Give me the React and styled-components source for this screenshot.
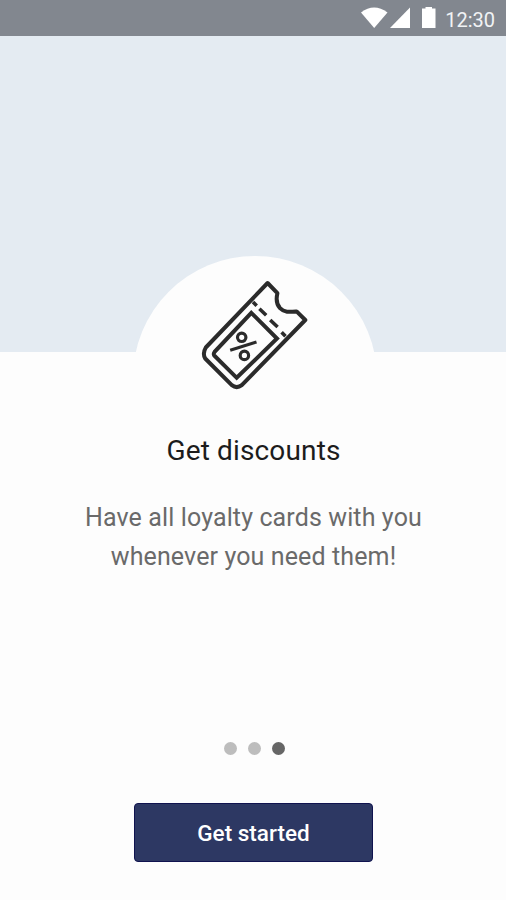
import React from 'react'
import styled, { createGlobalStyle } from 'styled-components'

const colors = {
    page: '#fdfdfd',
    statusbar: '#82878f',
    hero: '#e4ebf2',
    title: '#1c1c1c',
    text: '#6a6a6a',
    icon: '#2b2b2b',
    dot: '#bdbdbd',
    dotActive: '#666666',
    primary: '#2d3863',
    primaryDark: '#10134f'
}

function App() {
    return (
        <React.Fragment>
            <GlobalStyle />
            <Screen>
                <StatusBar>
                    <StatusIcons />
                    <Time>12:30</Time>
                </StatusBar>
                <Hero>
                    <Circle>
                        <TicketIcon />
                    </Circle>
                </Hero>
                <Content>
                    <Title>Get discounts</Title>
                    <Description>
                        <span>Have all loyalty cards with you</span>
                        <span>whenever you need them!</span>
                    </Description>
                </Content>
                <Pager steps={3} current={2} />
                <Button type="button">Get started</Button>
            </Screen>
        </React.Fragment>
    )
}

function Pager({ steps, current }) {
    return (
        <Dots>
            {Array.from({ length: steps }, (_, i) => (
                <Dot key={i} $active={i === current} />
            ))}
        </Dots>
    )
}

function StatusIcons() {
    return (
        <svg width="78" height="24" viewBox="0 0 78 24" fill="#fff">
            <path d="M1 6.5Q14 -3.5 27.5 6.5L14.2 22Z" />
            <path d="M50 1.5V22H30Z" />
            <path d="M62 2.5H65.5V1H72V2.5H75.5V22H62Z" />
        </svg>
    )
}

function TicketIcon() {
    return (
        <svg width="130" height="130" viewBox="0 0 130 130" fill="none" stroke={colors.icon} strokeWidth="4" strokeLinejoin="round">
            <path d="M77.6 13L87.4 23.2C86 29 86.2 34 90 38.2C94.2 42.6 99.5 42 106.6 41.4L115.3 50L51.8 115.2Q46.7 119 41.8 115.2L15.2 88.5Q12.3 83.5 15.8 77.5Z" />
            <path d="M61.3 42.8L87 68.5L46.7 107.8L24.2 85.4Q23.2 83.8 24.6 81.8Z" strokeLinejoin="miter" />
            <path d="M63 32L66.7 35.7M69.4 38.8L76.2 45.2M80.2 50L87.6 57M91.6 62.2L95.5 66.2" strokeWidth="3.6" />
            <circle cx="51.7" cy="67.3" r="4.2" strokeWidth="3.2" />
            <circle cx="54.4" cy="85.4" r="4.2" strokeWidth="3.2" />
            <path d="M40.2 80.2L66.5 72" strokeWidth="3" />
        </svg>
    )
}

const GlobalStyle = createGlobalStyle`
    body {
        margin: 0;
        font-family: Roboto, sans-serif;
    }
    * {
        box-sizing: border-box;
    }
`
const Screen = styled.main`
    display: flex;
    flex-direction: column;
    align-items: center;
    width: 506px;
    height: 900px;
    overflow: hidden;
    background: ${colors.page};
`
const StatusBar = styled.header`
    display: flex;
    flex: none;
    align-items: center;
    justify-content: flex-end;
    gap: 7px;
    width: 100%;
    height: 36px;
    padding-right: 11px;
    background: ${colors.statusbar};
    & svg {
        margin-bottom: 1px;
    }
`
const Time = styled.span`
    color: #f1f3f5;
    font-size: 20px;
    line-height: 24px;
    padding-top: 4px;
`
const Hero = styled.section`
    display: flex;
    flex: none;
    justify-content: center;
    align-items: flex-start;
    width: 100%;
    height: 316px;
    padding: 220px 0 0 4px;
    background: ${colors.hero};
`
const Circle = styled.div`
    display: flex;
    flex: none;
    justify-content: center;
    align-items: flex-start;
    width: 244px;
    height: 244px;
    padding-top: 14px;
    border-radius: 50%;
    background: ${colors.page};
`
const Content = styled.section`
    display: flex;
    flex: none;
    flex-direction: column;
    align-items: center;
    height: 384px;
    padding: 81px 0 0 1px;
`
const Title = styled.h1`
    margin: 0;
    color: ${colors.title};
    font-size: 28px;
    font-weight: 400;
    letter-spacing: 0.15px;
    line-height: 36px;
`
const Description = styled.p`
    display: flex;
    flex-direction: column;
    align-items: center;
    margin: 29px 0 0;
    color: ${colors.text};
    font-size: 25px;
    letter-spacing: 0.12px;
    line-height: 39px;
`
const Dots = styled.div`
    display: flex;
    flex: none;
    gap: 11px;
    padding: 6px 0 0 2px;
`
const Dot = styled.span`
    width: 13px;
    height: 13px;
    border-radius: 50%;
    background: ${props => (props.$active ? colors.dotActive : colors.dot)};
`
const Button = styled.button`
    flex: none;
    width: 239px;
    height: 59px;
    margin: 48px 0 0 1px;
    padding: 0;
    border: 1px solid ${colors.primaryDark};
    border-radius: 4px;
    background: ${colors.primary};
    color: #fff;
    font-family: inherit;
    font-size: 22.5px;
    font-weight: 500;
`

export default App
